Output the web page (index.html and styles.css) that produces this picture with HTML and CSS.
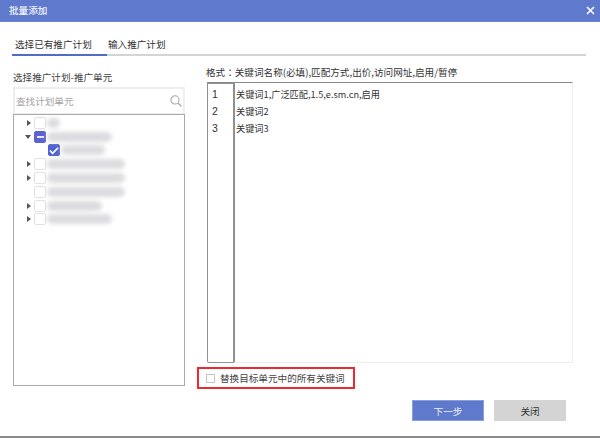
FILE: index.html
```html
<!DOCTYPE html>
<html lang="zh">
<head>
<meta charset="utf-8">
<title>批量添加</title>
<link rel="stylesheet" href="styles.css">
</head>
<body>
<div class="dialog">
  <header class="titlebar">
    <span class="title">批量添加</span>
    <svg class="close" width="9" height="9" viewBox="0 0 9 9"><path d="M1 1l7 7M8 1L1 8" stroke="#fff" stroke-width="1.6" fill="none"/></svg>
  </header>
  <nav class="tabs">
    <span class="tab active">选择已有推广计划</span>
    <span class="tab">输入推广计划</span>
  </nav>
  <main class="body">
    <section class="left">
      <div class="left-label">选择推广计划-推广单元</div>
      <div class="search">
        <span class="placeholder">查找计划单元</span>
        <svg width="12" height="12" viewBox="0 0 14 14"><circle cx="5.8" cy="5.8" r="4.8" stroke="#a5a5a5" stroke-width="1.2" fill="none"/><path d="M9.2 9.2l4 4" stroke="#a5a5a5" stroke-width="1.6"/></svg>
      </div>
      <div class="tree">
        <div class="node"><i class="arrow"></i><i class="box"></i><span class="mask m1"></span></div>
        <div class="node"><i class="arrow open"></i><i class="box mixed"></i><span class="mask m2"></span></div>
        <div class="node child"><i class="box checked"><svg width="11" height="9" viewBox="0 0 11 9"><path d="M1 4.5l3 3 6-6" stroke="#fff" stroke-width="1.8" fill="none"/></svg></i><span class="mask m3"></span></div>
        <div class="node"><i class="arrow"></i><i class="box"></i><span class="mask m4"></span></div>
        <div class="node"><i class="arrow"></i><i class="box"></i><span class="mask m4"></span></div>
        <div class="node"><i class="arrow blank"></i><i class="box"></i><span class="mask m4"></span></div>
        <div class="node"><i class="arrow"></i><i class="box"></i><span class="mask m5"></span></div>
        <div class="node"><i class="arrow"></i><i class="box"></i><span class="mask m2"></span></div>
      </div>
    </section>
    <section class="right">
      <div class="format">格式<span class="colon" lang="zh-Hant">：</span>关键词名称(必填),匹配方式,出价,访问网址,启用/暂停</div>
      <div class="editor">
        <div class="gutter"><div>1</div><div>2</div><div>3</div></div>
        <div class="code"><div>关键词1,广泛匹配,1.5,e.sm.cn,启用</div><div>关键词2</div><div>关键词3</div></div>
      </div>
      <label class="replace"><i class="plain-box"></i><span>替换目标单元中的所有关键词</span></label>
      <div class="actions">
        <button class="btn primary">下一步</button>
        <button class="btn">关闭</button>
      </div>
    </section>
  </main>
  <div class="bottom-line"></div>
</div>
</body>
</html>
```
FILE: styles.css
```css
* { box-sizing: border-box; }
html, body { margin: 0; height: 100%; background: #fff; }
body { font-family: "Noto Sans CJK SC", "Liberation Sans", sans-serif; font-size: 9.6px; color: #333; overflow: hidden; }
.dialog { width: 600px; height: 438px; display: flex; flex-direction: column; }
.titlebar { height: 22px; flex: none; background: #5f7acc; border-bottom: 1px solid #6c86d2; color: #f2f4fb; display: flex; align-items: center; justify-content: space-between; padding: 0 5px 1px 9px; }
.title { font-size: 9.6px; font-weight: 500; }
.tabs { height: 19px; margin: 15px 14px 0 12px; flex: none; display: flex; border-bottom: 2px solid #d4d4d4; }
.tab { width: 95px; padding-left: 3px; height: 19px; line-height: 15px; color: #333; }
.tab + .tab { width: auto; padding-left: 1px; }
.tab.active { border-bottom: 2px solid #4f6cc6; }
.body { flex: 1; display: flex; min-height: 0; }
.left { width: 198px; flex: none; padding: 14px 0 0 13px; }
.left-label { height: 17px; line-height: 14px; color: #444; }
.search { width: 172px; height: 27px; border: 2px solid #eeeeee; border-bottom-width: 1px; display: flex; align-items: center; justify-content: space-between; padding: 0 1px 0 1px; }
.placeholder { color: #a3a3a3; }
.tree { width: 172px; height: 272px; border: 1px solid #a9a9a9; padding: 1px 0 0 13px; display: flex; flex-direction: column; }
.node { height: 13.8px; display: flex; align-items: center; flex: none; }
.arrow { width: 0; height: 0; margin-right: 3px; border-left: 4px solid #555; border-top: 3px solid transparent; border-bottom: 3px solid transparent; flex: none; }
.arrow.open { border-left: 3px solid transparent; border-right: 3px solid transparent; border-top: 4px solid #555; border-bottom: 0; margin-left: -2px; margin-right: 3px; }
.arrow.blank { border-left-color: transparent; }
.box { width: 12px; height: 12px; border: 1px solid #e2e2e2; border-radius: 2px; background: #fff; display: flex; align-items: center; justify-content: center; flex: none; }
.box.mixed { background: #5a63cf; border-color: #5a63cf; }
.box.mixed::after { content: ""; width: 7px; height: 2px; background: #e8e8f8; }
.box.checked { background: #4f64d2; border-color: #4f64d2; }
.child { padding-left: 21px; }
.mask { height: 10px; margin-left: 1px; background: #dcdce0; border-radius: 5px; filter: blur(2px); }
.m1 { width: 13px; }
.m2 { width: 65px; }
.m3 { width: 44px; }
.m4 { width: 78px; }
.m5 { width: 55px; }
.right { flex: 1; padding: 9px 0 0 9px; display: flex; flex-direction: column; }
.format { height: 17px; line-height: 14px; color: #333; margin-left: -1px; }
.colon { font-family: "Noto Sans CJK TC", sans-serif; }
.editor { width: 366px; height: 281px; display: flex; border-top: 1px solid #8a8a8a; border-right: 1px solid #eee; border-bottom: 1px solid #eee; flex: none; }
.gutter { width: 28px; flex: none; border: 1px solid #909090; border-right-width: 2px; background: #fff; padding-top: 2px; margin-bottom: -1px; padding-left: 4px; line-height: 17px; color: #333; border-radius: 0 0 2px 2px; font-family: "Liberation Sans", sans-serif; font-size: 10.5px; }
.code { flex: 1; padding: 3px 0 0 1px; line-height: 17px; font-size: 9.2px; color: #333; }
.replace { width: 158px; height: 22px; margin: 4px 0 0 -10px; border: 2px solid #ee2a2e; display: flex; align-items: center; padding-left: 7px; gap: 5px; color: #444; }
.plain-box { width: 9px; height: 9px; border: 1px solid #c4c4c4; flex: none; }
.actions { display: flex; gap: 10px; margin: 11px 0 0 205px; }
.btn { width: 72px; height: 21px; border: 1px solid #d4d4d4; background: #d4d4d4; font: inherit; color: #333; padding: 0; line-height: 18px; }
.btn.primary { background: #5f7acc; border-color: #88a0e0; color: #eef1fa; }
.bottom-line { height: 2px; background: #8c8c8c; flex: none; }
```
